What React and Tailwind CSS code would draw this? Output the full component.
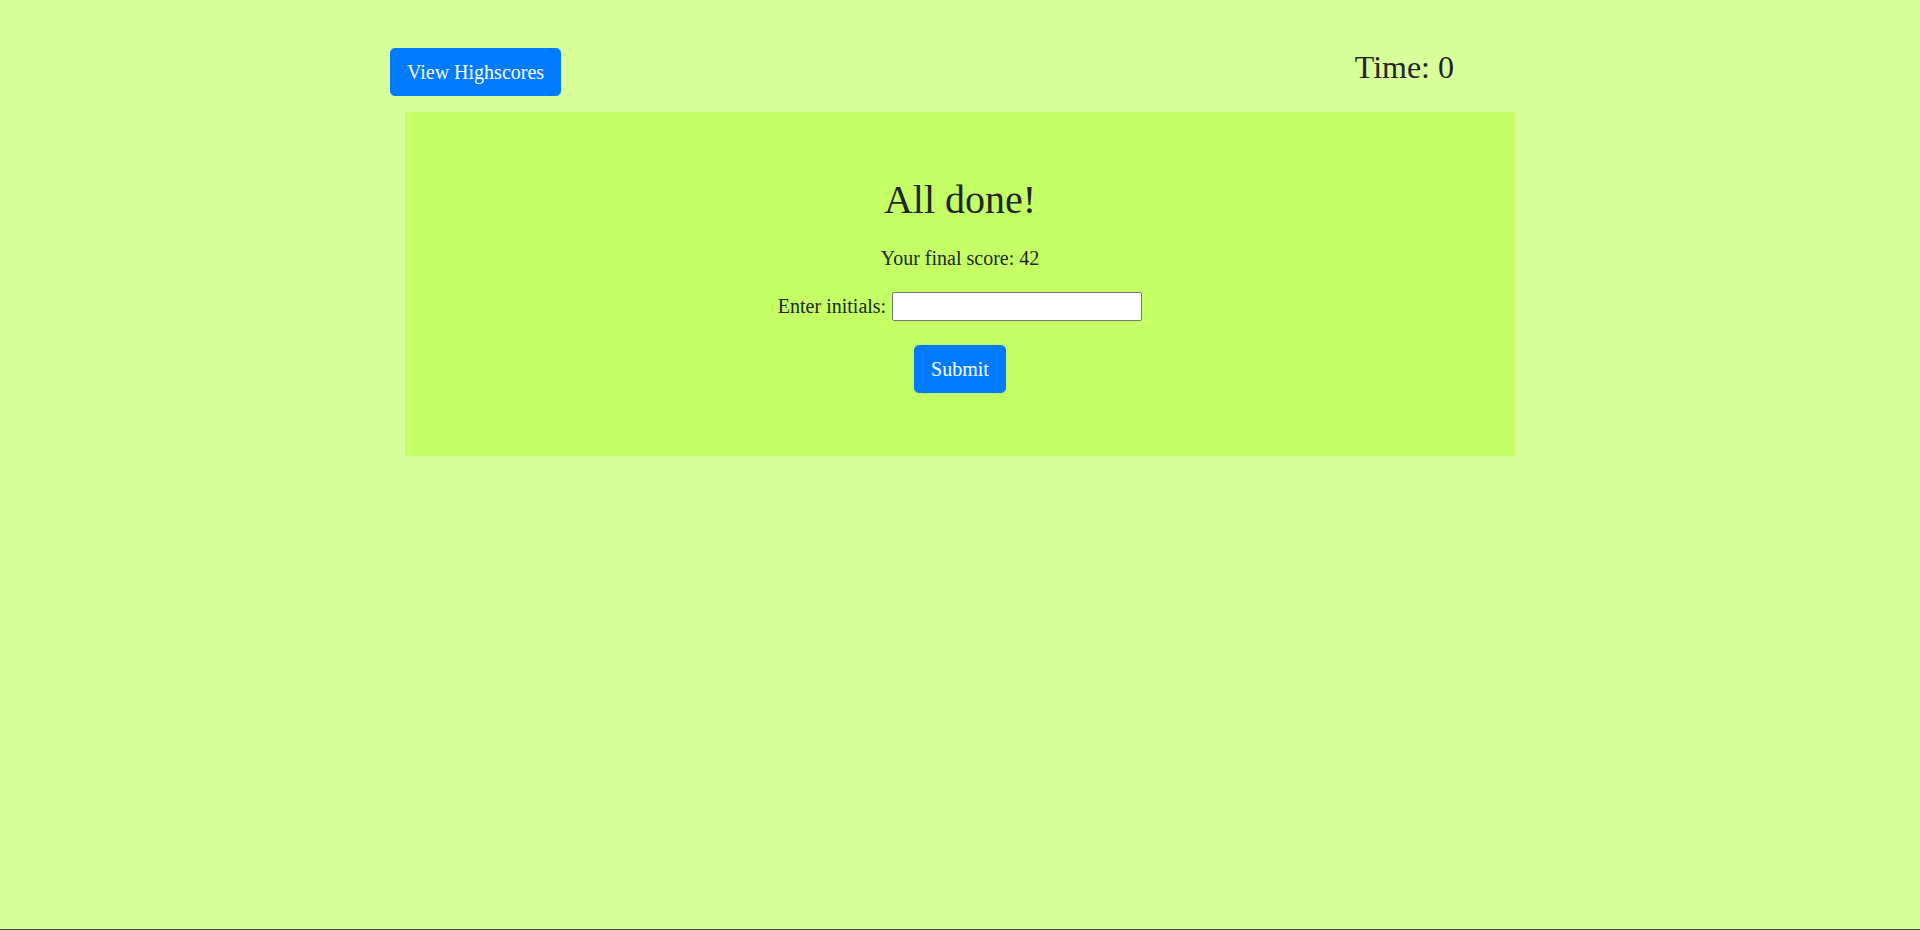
import React from 'react';

const App = () => {
    return (
        <div
            className="h-[930px] bg-[#d8ff99] border-b border-[#3b4d45] text-[#212529]"
            style={{ fontFamily: '"Liberation Serif", "Times New Roman", serif' }}
        >
            <div className="w-[1140px] mx-auto pt-[48px]">
                <div className="flex items-start justify-between">
                    <button className="bg-[#007bff] border border-[#007bff] text-white text-[20px] leading-[30px] px-4 py-2 rounded-[4.8px]">
                        View Highscores
                    </button>
                    <div className="text-[32px] leading-[38px] mr-[76px]">Time: 0</div>
                </div>
                <div className="mx-[15px] mt-[16px] bg-[#c4ff66] pt-[64px] pb-[63px] flex flex-col items-center">
                    <h1 className="text-[40px] leading-[48px] mb-[19px]">All done!</h1>
                    <p className="text-[20px] leading-[30px] mb-[18px]">Your final score: 42</p>
                    <div className="flex items-center gap-[6px] text-[20px] leading-[30px]">
                        <label htmlFor="initials">Enter initials:</label>
                        <input
                            id="initials"
                            type="text"
                            className="w-[250px] h-[29px] bg-white border border-[#767676] rounded-[2px] px-1 text-[16px]"
                        />
                    </div>
                    <button className="mt-[24px] bg-[#007bff] border border-[#007bff] text-white text-[20px] leading-[30px] px-4 py-2 rounded-[4.8px]">
                        Submit
                    </button>
                </div>
            </div>
        </div>
    );
};

export default App;
